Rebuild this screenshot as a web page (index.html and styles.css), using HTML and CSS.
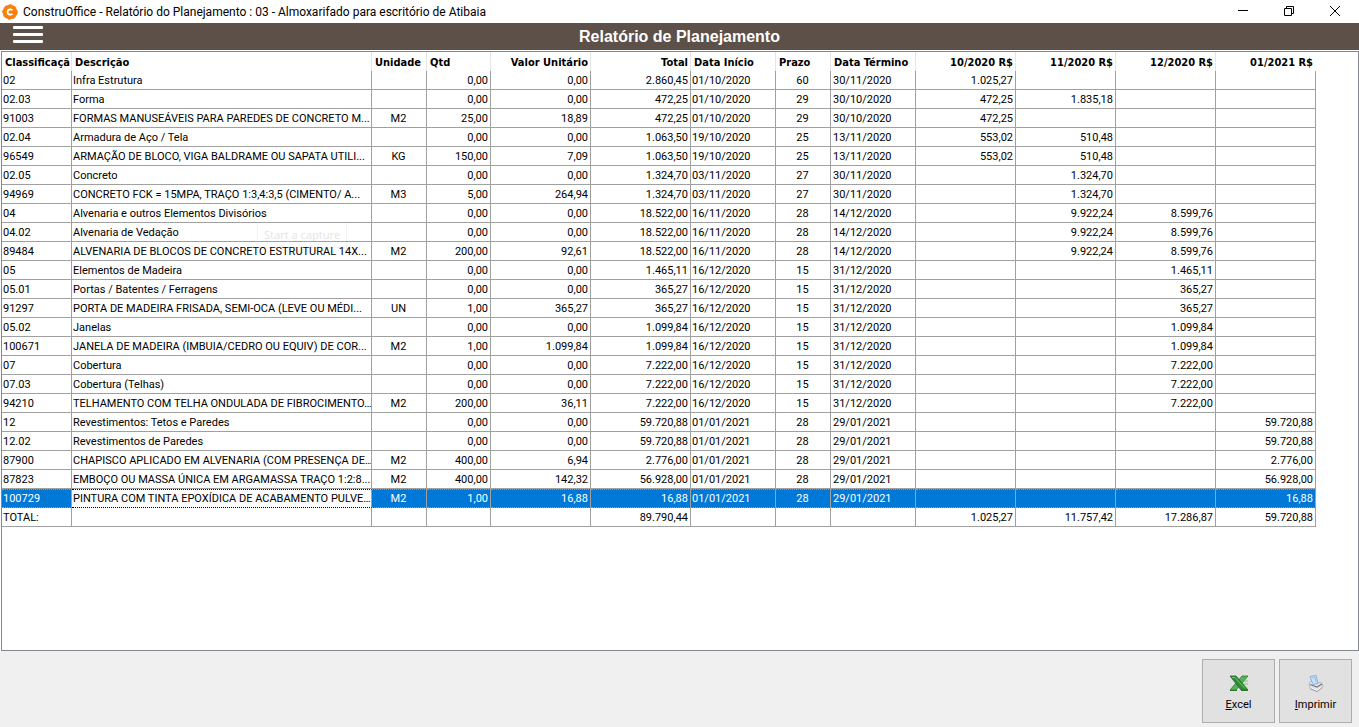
FILE: index.html
```html
<!DOCTYPE html>
<html lang="pt-BR">
<head>
<meta charset="utf-8">
<title>ConstruOffice - Relatório do Planejamento</title>
<link rel="stylesheet" href="styles.css">
</head>
<body>
<header class="titlebar">
  <svg class="logo" viewBox="0 0 16 16" aria-hidden="true"><circle cx="8" cy="8" r="7.300" fill="#f5820f"/><circle cx="8" cy="8" r="7.300" fill="none" stroke="#f5820f" stroke-dasharray="2.8 2.7"/><path d="M10.4 6.300A2.700 2.700 0 1 0 10.400 9.700" fill="none" stroke="#fff" stroke-width="1.800"/></svg>
  <span class="caption">ConstruOffice - Relatório do Planejamento : 03 - Almoxarifado para escritório de Atibaia</span>
  <button class="winbtn" aria-label="Minimizar"><svg viewBox="0 0 12 12"><path d="M1 5.500h10"/></svg></button>
  <button class="winbtn" aria-label="Restaurar"><svg viewBox="0 0 12 12"><path d="M1.500 3.500h7v7h-7zM3.500 3.500v-2h7v7h-2"/></svg></button>
  <button class="winbtn" aria-label="Fechar"><svg viewBox="0 0 12 12"><path d="M1 1l10 10M11 1L1 11"/></svg></button>
</header>
<div class="banner">
  <button class="menu" aria-label="Menu"><span></span><span></span><span></span></button>
  <h1>Relatório de Planejamento</h1>
</div>
<main class="grid">
<table>
<colgroup><col class="w-code"><col class="w-desc"><col class="w-short"><col class="w-qty"><col class="w-money"><col class="w-money"><col class="w-date"><col class="w-short"><col class="w-date"><col class="w-money"><col class="w-money"><col class="w-money"><col class="w-money"></colgroup>
<thead>
<tr><th>Classificaçã</th><th>Descrição</th><th class="left">Unidade</th><th class="left">Qtd</th><th>Valor Unitário</th><th>Total</th><th>Data Início</th><th class="left">Prazo</th><th>Data Término</th><th>10/2020 R$</th><th>11/2020 R$</th><th>12/2020 R$</th><th>01/2021 R$</th></tr>
</thead>
<tbody>
<tr><td>02<td>Infra Estrutura<td><td>0,00<td>0,00<td>2.860,45<td>01/10/2020<td>60<td>30/11/2020<td>1.025,27<td><td><td></tr>
<tr><td>02.03<td>Forma<td><td>0,00<td>0,00<td>472,25<td>01/10/2020<td>29<td>30/10/2020<td>472,25<td>1.835,18<td><td></tr>
<tr><td>91003<td>FORMAS MANUSEÁVEIS PARA PAREDES DE CONCRETO M...<td>M2<td>25,00<td>18,89<td>472,25<td>01/10/2020<td>29<td>30/10/2020<td>472,25<td><td><td></tr>
<tr><td>02.04<td>Armadura de Aço / Tela<td><td>0,00<td>0,00<td>1.063,50<td>19/10/2020<td>25<td>13/11/2020<td>553,02<td>510,48<td><td></tr>
<tr><td>96549<td>ARMAÇÃO DE BLOCO, VIGA BALDRAME OU SAPATA UTILI...<td>KG<td>150,00<td>7,09<td>1.063,50<td>19/10/2020<td>25<td>13/11/2020<td>553,02<td>510,48<td><td></tr>
<tr><td>02.05<td>Concreto<td><td>0,00<td>0,00<td>1.324,70<td>03/11/2020<td>27<td>30/11/2020<td><td>1.324,70<td><td></tr>
<tr><td>94969<td>CONCRETO FCK = 15MPA, TRAÇO 1:3,4:3,5 (CIMENTO/ A...<td>M3<td>5,00<td>264,94<td>1.324,70<td>03/11/2020<td>27<td>30/11/2020<td><td>1.324,70<td><td></tr>
<tr><td>04<td>Alvenaria e outros Elementos Divisórios<td><td>0,00<td>0,00<td>18.522,00<td>16/11/2020<td>28<td>14/12/2020<td><td>9.922,24<td>8.599,76<td></tr>
<tr><td>04.02<td>Alvenaria de Vedação<td><td>0,00<td>0,00<td>18.522,00<td>16/11/2020<td>28<td>14/12/2020<td><td>9.922,24<td>8.599,76<td></tr>
<tr><td>89484<td>ALVENARIA DE BLOCOS DE CONCRETO ESTRUTURAL 14X...<td>M2<td>200,00<td>92,61<td>18.522,00<td>16/11/2020<td>28<td>14/12/2020<td><td>9.922,24<td>8.599,76<td></tr>
<tr><td>05<td>Elementos de Madeira<td><td>0,00<td>0,00<td>1.465,11<td>16/12/2020<td>15<td>31/12/2020<td><td><td>1.465,11<td></tr>
<tr><td>05.01<td>Portas / Batentes / Ferragens<td><td>0,00<td>0,00<td>365,27<td>16/12/2020<td>15<td>31/12/2020<td><td><td>365,27<td></tr>
<tr><td>91297<td>PORTA DE MADEIRA FRISADA, SEMI-OCA (LEVE OU MÉDI...<td>UN<td>1,00<td>365,27<td>365,27<td>16/12/2020<td>15<td>31/12/2020<td><td><td>365,27<td></tr>
<tr><td>05.02<td>Janelas<td><td>0,00<td>0,00<td>1.099,84<td>16/12/2020<td>15<td>31/12/2020<td><td><td>1.099,84<td></tr>
<tr><td>100671<td>JANELA DE MADEIRA (IMBUIA/CEDRO OU EQUIV) DE COR...<td>M2<td>1,00<td>1.099,84<td>1.099,84<td>16/12/2020<td>15<td>31/12/2020<td><td><td>1.099,84<td></tr>
<tr><td>07<td>Cobertura<td><td>0,00<td>0,00<td>7.222,00<td>16/12/2020<td>15<td>31/12/2020<td><td><td>7.222,00<td></tr>
<tr><td>07.03<td>Cobertura (Telhas)<td><td>0,00<td>0,00<td>7.222,00<td>16/12/2020<td>15<td>31/12/2020<td><td><td>7.222,00<td></tr>
<tr><td>94210<td>TELHAMENTO COM TELHA ONDULADA DE FIBROCIMENTO…<td>M2<td>200,00<td>36,11<td>7.222,00<td>16/12/2020<td>15<td>31/12/2020<td><td><td>7.222,00<td></tr>
<tr><td>12<td>Revestimentos: Tetos e Paredes<td><td>0,00<td>0,00<td>59.720,88<td>01/01/2021<td>28<td>29/01/2021<td><td><td><td>59.720,88</tr>
<tr><td>12.02<td>Revestimentos de Paredes<td><td>0,00<td>0,00<td>59.720,88<td>01/01/2021<td>28<td>29/01/2021<td><td><td><td>59.720,88</tr>
<tr><td>87900<td>CHAPISCO APLICADO EM ALVENARIA (COM PRESENÇA DE…<td>M2<td>400,00<td>6,94<td>2.776,00<td>01/01/2021<td>28<td>29/01/2021<td><td><td><td>2.776,00</tr>
<tr><td>87823<td>EMBOÇO OU MASSA ÚNICA EM ARGAMASSA TRAÇO 1:2:8...<td>M2<td>400,00<td>142,32<td>56.928,00<td>01/01/2021<td>28<td>29/01/2021<td><td><td><td>56.928,00</tr>
<tr class="selected"><td>100729<td class="focused">PINTURA COM TINTA EPOXÍDICA DE ACABAMENTO PULVE…<td>M2<td>1,00<td>16,88<td>16,88<td>01/01/2021<td>28<td>29/01/2021<td><td><td><td>16,88</tr>
<tr><td>TOTAL:<td><td><td><td><td>89.790,44<td><td><td><td>1.025,27<td>11.757,42<td>17.286,87<td>59.720,88</tr>
</tbody>
</table>
<div class="tooltip">Start a capture</div>
</main>
<footer class="actions">
  <button class="action"><svg viewBox="0 0 20 18" aria-hidden="true"><path d="M12 3h7v12h-9z" fill="#d3e6d0"/><path d="M14 6h5M14 9h5" stroke="#8cc48a" stroke-width="1"/><path d="M13 1h6L7 15H1z" fill="#5cb05a" stroke="#2b7a30" stroke-width=".8"/><path d="M1 1h6l12 14h-7z" fill="#2f8b38" stroke="#206b29" stroke-width=".8"/><path d="M3 2.500h3l10 11" fill="none" stroke="#77c47a"/><path d="M1 15.500h7M12 15.500h7" stroke="#2b7a30"/></svg><span><u>E</u>xcel</span></button>
  <button class="action"><svg viewBox="0 0 20 18" aria-hidden="true"><path d="M3 8l3-2 10 2 1 4-6 4-7-2z" fill="#e4e4e8" stroke="#b0b0b6" stroke-width=".8"/><path d="M4 1.500l6-1 2 8-5 1z" fill="#cfe4fb" stroke="#6fa3e0" stroke-width=".8"/><path d="M6 3l3-.5 1 5" fill="none" stroke="#93c0f2"/><path d="M4 9.500l7 2.500 5-3" fill="none" stroke="#77777f" stroke-width="1.200"/><path d="M6 13.500l5 2 4-2.500" fill="none" stroke="#fff"/><path d="M5 14l6 2.500 5-3.500" fill="none" stroke="#8c8c94" stroke-width=".8"/></svg><span><u>I</u>mprimir</span></button>
</footer>
</body>
</html>
```
FILE: styles.css
```css
* { box-sizing: border-box; }

body {
  margin: 0;
  min-height: 100vh;
  display: flex;
  flex-direction: column;
  background: #fff;
  color: #000;
  font: 11px/17px Roboto, Tahoma, sans-serif;
}

button { font: inherit; color: inherit; }

.titlebar {
  display: flex;
  align-items: center;
  height: 23px;
  padding: 0 1px 0 2px;
}
.logo { width: 16px; height: 16px; }
.caption {
  flex: 1;
  padding-left: 5px;
  font-size: 12px;
  line-height: 18px;
  white-space: nowrap;
}
.winbtn {
  width: 46px;
  height: 23px;
  padding: 0 0 2px;
  border: 0;
  background: none;
}
.winbtn svg {
  display: block;
  width: 12px;
  height: 12px;
  margin: 0 auto;
  fill: none;
  stroke: #000;
}

.banner {
  display: grid;
  grid-template-columns: 1fr auto 1fr;
  align-items: center;
  height: 27px;
  padding: 0 13px;
  background: #5c5049;
  color: #fff;
}
.banner h1 {
  margin: 0;
  font: bold 16px/24px "Liberation Sans", Arial, sans-serif;
}
.menu {
  display: flex;
  flex-direction: column;
  gap: 4px;
  width: 30px;
  padding: 0 0 4px;
  border: 0;
  background: none;
}
.menu span { height: 3px; border-radius: 1px; background: #fff; }

.grid {
  position: relative;
  isolation: isolate;
  flex: 1;
  margin: 1px 0 0 1px;
  border: 1px solid #828790;
  overflow: hidden;
}
table {
  table-layout: fixed;
  width: 1314px;
  border-spacing: 0;
}
.w-code { width: 70px; }
.w-desc { width: 300px; }
.w-short { width: 55px; }
.w-qty { width: 64px; }
.w-money { width: 100px; }
.w-date { width: 85px; }

th, td {
  height: 19px;
  padding: 1px 2px 0 1px;
  border-right: 1px solid #a0a0a0;
  text-align: right;
  white-space: nowrap;
  overflow: hidden;
}
td { border-bottom: 1px solid #a0a0a0; }
td:nth-child(2) { padding-right: 0; }
td:nth-child(9) { padding-left: 2px; }
th {
  padding: 2px 2px 0 3px;
  border-right-color: #e5e5e5;
  font-family: "DejaVu Sans Condensed", "DejaVu Sans", Tahoma, sans-serif;
}
th:first-child { padding-right: 0; }
th:last-child { border-right-color: #fff; }
:is(th, td):is(:nth-child(1), :nth-child(2), :nth-child(7), :nth-child(9)) { text-align: left; }
th.left { text-align: left; }
td:is(:nth-child(3), :nth-child(8)) { text-align: center; }

.selected td {
  border-top: 1px dotted #e0873a;
  border-bottom: 1px dotted #e0873a;
  background: #0078d7;
  color: #fff;
  line-height: 16px;
}
.selected .focused {
  border-top-color: #000;
  border-bottom-color: #000;
  background: #fff;
  color: #000;
}

.tooltip {
  position: absolute;
  z-index: -1;
  left: 255px;
  top: 170px;
  padding: 3px 6px;
  border: 1px solid #f3f3f3;
  color: #e6e6e6;
  font: 11px/18px "Noto Sans", sans-serif;
}

.actions {
  display: flex;
  justify-content: flex-end;
  gap: 4px;
  padding: 8px 7px 4px;
  background: #f0f0f0;
}
.action {
  display: flex;
  flex-direction: column;
  align-items: center;
  gap: 3px;
  width: 73px;
  height: 64px;
  padding: 15px 0 0;
  border: 1px solid #adadad;
  background: #e1e1e1;
}
.action svg { width: 20px; height: 18px; }
.action span { line-height: 18px; }
```
